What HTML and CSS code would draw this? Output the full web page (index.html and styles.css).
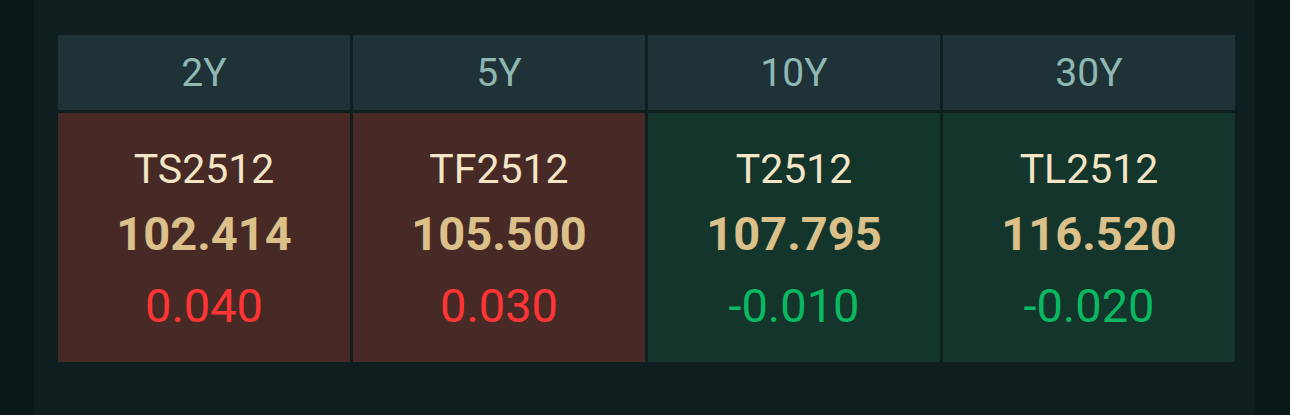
FILE: index.html
```html
<!DOCTYPE html>
<html lang="zh">
<head>
<meta charset="utf-8">
<title>国债期货</title>
<link rel="stylesheet" href="styles.css">
</head>
<body>
<div class="panel">
  <div class="board">
    <div class="head">2Y</div>
    <div class="head">5Y</div>
    <div class="head">10Y</div>
    <div class="head">30Y</div>
    <div class="cell up">
      <div class="code">TS2512</div>
      <div class="price">102.414</div>
      <div class="chg">0.040</div>
    </div>
    <div class="cell up">
      <div class="code">TF2512</div>
      <div class="price">105.500</div>
      <div class="chg">0.030</div>
    </div>
    <div class="cell down">
      <div class="code">T2512</div>
      <div class="price">107.795</div>
      <div class="chg">-0.010</div>
    </div>
    <div class="cell down">
      <div class="code">TL2512</div>
      <div class="price">116.520</div>
      <div class="chg">-0.020</div>
    </div>
  </div>
</div>
</body>
</html>
```

FILE: styles.css
```css
html, body {
  margin: 0;
  padding: 0;
  height: 100%;
}
body {
  background: #0a1818;
  font-family: Roboto, "Noto Sans", "Liberation Sans", sans-serif;
}
.panel {
  margin-left: 34px;
  width: 1221px;
  height: 415px;
  box-sizing: border-box;
  padding: 35px 20px 0 24px;
  background: #0f1e1e;
}
.board {
  display: grid;
  grid-template-columns: repeat(4, 292px);
  grid-template-rows: 75px 249px;
  gap: 3px;
}
.head {
  background: #1e3238;
  color: #8fb8b2;
  font-size: 39px;
  display: flex;
  align-items: center;
  justify-content: center;
}
.cell {
  display: flex;
  flex-direction: column;
  align-items: center;
  padding-top: 32px;
  box-sizing: border-box;
}
.cell.up { background: #472a26; }
.cell.down { background: #14352b; }
.code {
  color: #f3e5c6;
  font-size: 41px;
  line-height: 48px;
}
.price {
  color: #dbc08a;
  font-size: 47px;
  font-weight: 700;
  line-height: 82px;
}
.chg {
  font-size: 47px;
  line-height: 62px;
}
.up .chg { color: #ff3535; }
.down .chg { color: #0bb862; }
```
